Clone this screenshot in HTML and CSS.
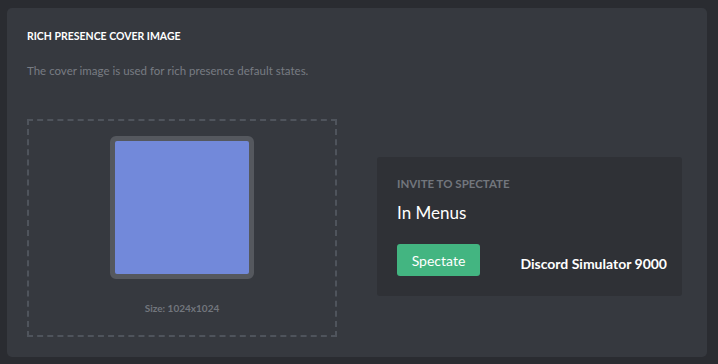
FILE: index.html
```html
<!DOCTYPE html>
<html>
<head>
    <title>Rich Presence Cover Image</title>
    <meta name="viewport" content="width=device-width, initial-scale=1">
    <link rel="stylesheet" href="styles.css">
</head>
<body>
    <main class="card">
        <h2 class="card-title">Rich Presence Cover Image</h2>
        <p class="card-desc">The cover image is used for rich presence default states.</p>
        <div class="card-body">
            <div class="upload">
                <div class="cover-frame">
                    <div class="cover"></div>
                </div>
                <div class="size">Size: 1024x1024</div>
            </div>
            <section class="invite">
                <h3 class="invite-title">Invite to Spectate</h3>
                <div class="invite-state">In Menus</div>
                <div class="invite-row">
                    <button class="spectate">Spectate</button>
                    <span class="game">Discord Simulator 9000</span>
                </div>
            </section>
        </div>
    </main>
</body>
</html>
```

FILE: styles.css
```css
body {
    background-color: #2a2c31;
    margin: 0;
    padding: 8px 11px 7px 7px;
    font-family: Lato, "Noto Sans", sans-serif;
    color: #dcddde;
}

.card {
    background-color: #36393f;
    border-radius: 5px;
    padding: 20px;
    height: 309px;
}

.card-title {
    margin: 0;
    font-size: 10.5px;
    font-weight: 700;
    text-transform: uppercase;
    color: #ffffff;
    line-height: 14px;
    padding-top: 1px;
}

.card-desc {
    margin: 20px 0 0 0;
    font-size: 11.5px;
    line-height: 16px;
    color: #787c83;
}

.card-body {
    display: flex;
    align-items: flex-start;
    gap: 40px;
    margin-top: 40px;
}

.upload {
    width: 306px;
    height: 214px;
    border: 2px dashed #4f545c;
    display: flex;
    flex-direction: column;
    align-items: center;
}

.cover-frame {
    margin-top: 15px;
    width: 134px;
    height: 133px;
    border: 5px solid #55585e;
    border-radius: 6px;
    background-color: #55585e;
}

.cover {
    width: 100%;
    height: 100%;
    background-color: #7289da;
    border-radius: 2px;
}

.size {
    margin-top: 23px;
    font-size: 10px;
    font-weight: 700;
    color: #72767d;
}

.invite {
    width: 270px;
    background-color: #2f3136;
    border-radius: 3px;
    padding: 20px 15px 20px 20px;
    margin-top: 38px;
}

.invite-title {
    margin: 0;
    font-size: 11.5px;
    font-weight: 700;
    text-transform: uppercase;
    color: #72767d;
    line-height: 14px;
}

.invite-state {
    margin-top: 12px;
    font-size: 17px;
    line-height: 20px;
    color: #ffffff;
}

.invite-row {
    display: flex;
    align-items: flex-end;
    justify-content: space-between;
    margin-top: 21px;
}

.spectate {
    width: 83px;
    height: 32px;
    border: none;
    border-radius: 3px;
    background-color: #43b581;
    color: #ffffff;
    font-family: Lato, "Noto Sans", sans-serif;
    font-size: 14px;
}

.game {
    font-size: 14px;
    font-weight: 700;
    color: #ffffff;
    line-height: 18px;
    padding-bottom: 3px;
}
```
